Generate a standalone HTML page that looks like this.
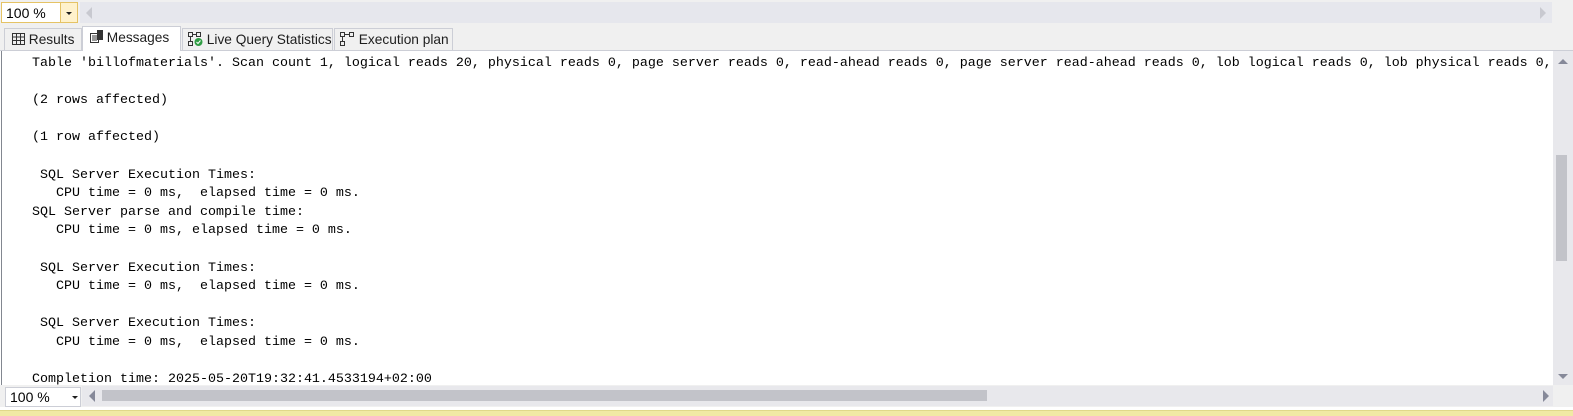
<!DOCTYPE html>
<html><head><style>
*{margin:0;padding:0;box-sizing:border-box}
body{width:1573px;height:416px;overflow:hidden;background:#fff;font-family:"Liberation Sans",sans-serif;position:relative}
.topbar{position:absolute;left:0;top:0;width:1573px;height:25px;background:#f0f0f0}
.topscroll{position:absolute;left:80px;top:2px;width:1472px;height:21px;background:#e6e7ed}
.zoom1{position:absolute;left:1px;top:2px;width:60px;height:21px;background:#fff;border:1px solid #e5c365;font-size:14px;padding:2px 0 0 4px}
.zoomdd{position:absolute;left:61px;top:2px;width:17px;height:21px;background:#fff2cc;border:1px solid #e5c365;border-left:none}
.tri-d{position:absolute;width:0;height:0;border-left:3px solid transparent;border-right:3px solid transparent;border-top:3px solid #1e1e1e}
.tabstrip{position:absolute;left:0;top:25px;width:1573px;height:26px;background:#f0f0f0;border-bottom:1px solid #ccced6}
.tab{position:absolute;top:28px;height:22px;background:#f0f0f0;border:1px solid #ccced6;border-bottom:none;font-size:13.7px;color:#1e1e1e;padding-top:3px;white-space:nowrap;overflow:hidden}
.tab.act{background:#fff;top:26px;height:25px;padding-top:3px}
.content{position:absolute;left:1px;top:51px;width:1552px;height:334px;border-left:1px solid #828790;background:#fff}
pre{position:absolute;left:32px;top:55px;font-family:"Liberation Mono",monospace;font-size:13.33px;line-height:18.6px;color:#000}
.vscroll{position:absolute;left:1553px;top:51px;width:20px;height:334px;background:#e8e8ec}
.thumb{position:absolute;left:1556px;top:155px;width:11px;height:106px;background:#c2c3c9}
.bot{position:absolute;left:0;top:385px;width:1573px;height:22px;background:#f0f0f0}
.botscroll{position:absolute;left:82px;top:386px;width:1471px;height:20px;background:#e8e8ec}
.bthumb{position:absolute;left:102px;top:390px;width:885px;height:11px;background:#c2c3c9}
.zoom2{position:absolute;left:5px;top:387px;width:76px;height:20px;background:#fff;border:1px solid #ccced6;font-size:14px;padding:1px 0 0 4px}
.yellow{position:absolute;left:0;top:410px;width:1573px;height:6px;background:#f1e9a4;border-top:1px solid #e0d88a}
</style></head><body>
<div class="topbar"></div>
<div class="topscroll"></div>
<div style="position:absolute;left:86px;top:7px;width:0;height:0;border-top:6px solid transparent;border-bottom:6px solid transparent;border-right:6px solid #c8c9d0"></div>
<div style="position:absolute;left:1540px;top:7px;width:0;height:0;border-top:6px solid transparent;border-bottom:6px solid transparent;border-left:6px solid #c8c9d0"></div>
<div class="zoom1">100 %</div>
<div class="zoomdd"><div class="tri-d" style="left:5px;top:9px"></div></div>
<div class="tabstrip"></div>
<div class="tab" style="left:4px;width:78px;padding-left:7px">
<svg width="13" height="12" style="vertical-align:-1px" viewBox="0 0 13 12"><rect x="0.5" y="0.5" width="12" height="11" fill="none" stroke="#333"/><path d="M0 4h13M0 7.5h13M4.5 0v12M8.5 0v12" stroke="#333"/></svg> Results</div>
<div class="tab act" style="left:82px;width:99px;padding-left:7px">
<svg width="13" height="13" style="vertical-align:-1px" viewBox="0 0 13 13"><rect x="0.5" y="3.5" width="8" height="9" fill="#fff" stroke="#333"/><path d="M2 6h5M2 8h5M2 10h5" stroke="#333"/><rect x="7" y="0" width="6" height="10" fill="#333"/></svg> Messages</div>
<div class="tab" style="left:182px;width:151px;padding-left:5px">
<svg width="15" height="14" style="vertical-align:-2px" viewBox="0 0 15 14"><rect x="0.5" y="0.5" width="4" height="4" fill="none" stroke="#333"/><rect x="8.5" y="0.5" width="4" height="4" fill="none" stroke="#333"/><rect x="0.5" y="9.5" width="4" height="4" fill="none" stroke="#333"/><path d="M4.5 2.5h4M2.5 4.5v5" stroke="#333"/><circle cx="10.5" cy="10" r="4" fill="#2f9e44"/><path d="M8.5 10l1.5 1.5 2.5-3" stroke="#fff" fill="none"/></svg> Live Query Statistics</div>
<div class="tab" style="left:334px;width:119px;padding-left:5px">
<svg width="15" height="14" style="vertical-align:-2px" viewBox="0 0 15 14"><rect x="0.5" y="0.5" width="4" height="4" fill="none" stroke="#333"/><rect x="9.5" y="0.5" width="4" height="4" fill="none" stroke="#333"/><rect x="0.5" y="9.5" width="4" height="4" fill="none" stroke="#333"/><path d="M4.5 2.5h5M2.5 4.5v5" stroke="#333"/></svg> Execution plan</div>
<div class="content"></div>
<pre>Table 'billofmaterials'. Scan count 1, logical reads 20, physical reads 0, page server reads 0, read-ahead reads 0, page server read-ahead reads 0, lob logical reads 0, lob physical reads 0,

(2 rows affected)

(1 row affected)

 SQL Server Execution Times:
   CPU time = 0 ms,  elapsed time = 0 ms.
SQL Server parse and compile time: 
   CPU time = 0 ms, elapsed time = 0 ms.

 SQL Server Execution Times:
   CPU time = 0 ms,  elapsed time = 0 ms.

 SQL Server Execution Times:
   CPU time = 0 ms,  elapsed time = 0 ms.

Completion time: 2025-05-20T19:32:41.4533194+02:00</pre>
<div class="vscroll"></div>
<div style="position:absolute;left:1558px;top:59px;width:0;height:0;border-left:5px solid transparent;border-right:5px solid transparent;border-bottom:5px solid #868999"></div>
<div style="position:absolute;left:1558px;top:374px;width:0;height:0;border-left:5px solid transparent;border-right:5px solid transparent;border-top:5px solid #868999"></div>
<div class="thumb"></div>
<div class="bot"></div>
<div class="botscroll"></div>
<div style="position:absolute;left:89px;top:390px;width:0;height:0;border-top:6px solid transparent;border-bottom:6px solid transparent;border-right:6px solid #868999"></div>
<div style="position:absolute;left:1543px;top:390px;width:0;height:0;border-top:6px solid transparent;border-bottom:6px solid transparent;border-left:6px solid #868999"></div>
<div class="bthumb"></div>
<div class="zoom2">100 %<div class="tri-d" style="left:66px;top:8px"></div></div>
<div class="yellow"></div>
</body></html>
